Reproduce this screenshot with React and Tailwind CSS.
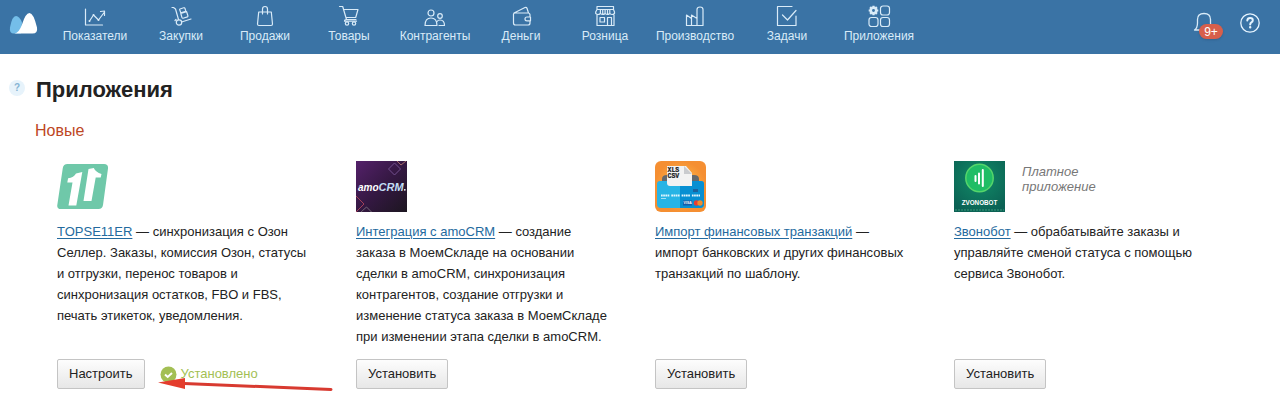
import React from 'react';

const icon = {
  fill: 'none',
  stroke: 'currentColor',
  strokeWidth: 1.2,
  strokeLinecap: 'round',
  strokeLinejoin: 'round',
  width: 24,
  height: 24,
  viewBox: '0 0 24 24',
  'aria-hidden': true,
};

const ChartIcon = () => (
  <svg {...icon}>
    <path d="M2.500 5v16h17M6.500 17l4-6 5 5 6-8M17.500 7.500 21.500 7v4.500" />
    <g fill="currentColor" stroke="none">
      <circle cx="6.500" cy="17" r="1" />
      <circle cx="10.500" cy="11" r="1" />
      <circle cx="15.500" cy="16" r="1" />
    </g>
  </svg>
);

const TrolleyIcon = () => (
  <svg {...icon}>
    <path d="M3 3.500h1.500l2 1.500 3 10.500M12.500 18l9.500-3M7 15.500l-1 1" />
    <circle cx="10" cy="18.500" r="2.700" />
    <path d="m11 5 3.700-1.200q1-.3 1.300.7l.8 2.700-5 1.600-1.100-3q-.2-.6.300-.8ZM11.800 9.500l5.800-1.800 1.300 4q.2.900-.5 1.200l-4.300 1.300q-.8.200-1.100-.6Z" />
  </svg>
);

const BagIcon = () => (
  <svg {...icon}>
    <path d="M5.700 8h12.600l1.200 12q0 1.500-1.500 1.500H6q-1.500 0-1.500-1.500ZM9.500 10V5q0-2.500 2.500-2.500T14.500 5v5" />
  </svg>
);

const CartIcon = () => (
  <svg {...icon}>
    <path d="M2.500 2.500h3.200l3.800 13h9.500M6.500 5.500h14.500l-2.300 8H9M9.500 15.500q-2 0-2 1.700h12" />
    <circle cx="10" cy="19.500" r="1.700" />
    <circle cx="17" cy="19.500" r="1.700" />
  </svg>
);

const PeopleIcon = () => (
  <svg {...icon}>
    <circle cx="8" cy="9" r="3" />
    <circle cx="17" cy="12" r="2.300" />
    <path d="M2 21.500q0-7.500 6-7.500t6 7.500ZM14 17.500q1-1.500 3-1.500 4.500 0 4.500 5.500H16" />
  </svg>
);

const WalletIcon = () => (
  <svg {...icon}>
    <path d="M4.500 10v9q0 2 2 2h12.500q2 0 2-2v-2.200M21 13v-2q0-2-2-2H6q-1.500 0-1.500 1M5 9l11-5.500q1.500-.5 2 .8L19.500 9M21 13h-3q-2 0-2 1.900t2 1.900h3.500V13Z" />
  </svg>
);

const ShopIcon = () => (
  <svg {...icon}>
    <path d="M4 2.500h16.500v3H4ZM4 5.500 2.700 8v1.500q2.400 2 4.700 0 2.400 2 4.700 0 2.400 2 4.700 0 2.400 2 4.700 0V8l-1-2.500M7.400 5.500v4M12.100 5.500v4M16.800 5.500v4M9.700 5.500v4M14.500 5.500v4M4 11v10.500h17V11M7 13.500h4.500v4.500H7ZM14.500 21.500v-8h4v8" />
  </svg>
);

const FactoryIcon = () => (
  <svg {...icon}>
    <path d="M3.500 21.500V11l5 3.500v7ZM8.500 14.500V11l5.500 3.500v7M14 14.500V5.500q0-2.500 3-2.500t3 2.500v16H3.500" />
  </svg>
);

const TaskIcon = () => (
  <svg {...icon}>
    <path d="M17 2.500H2.500v19h18.500V12M7.500 11l5 5L21 6.500" />
  </svg>
);

const AppsIcon = () => (
  <svg {...icon}>
    <rect x="13.500" y="2" width="9" height="9" rx="2.500" />
    <rect x="2" y="13.500" width="9" height="9" rx="2.500" />
    <rect x="13.500" y="13.500" width="9" height="9" rx="2.500" />
    <circle cx="6.500" cy="6.500" r="2.700" strokeWidth="2.500" />
    <path d="M6.500 1.700v1.500M6.500 9.800v1.500M1.700 6.500h1.500M9.800 6.500h1.500M3.100 3.100l1 1M8.900 8.900l1 1M9.900 3.100l-1 1M4.100 8.900l-1 1" strokeWidth="2.200" strokeLinecap="butt" />
  </svg>
);

const NAV = [
  ['Показатели', ChartIcon, 'w-[86px]'],
  ['Закупки', TrolleyIcon, 'w-[86px]'],
  ['Продажи', BagIcon, 'w-[82px]'],
  ['Товары', CartIcon, 'w-[86px]'],
  ['Контрагенты', PeopleIcon, 'w-[86px]'],
  ['Деньги', WalletIcon, 'w-[86px]'],
  ['Розница', ShopIcon, 'w-[82px]'],
  ['Производство', FactoryIcon, 'w-[98px]'],
  ['Задачи', TaskIcon, 'w-[86px]'],
  ['Приложения', AppsIcon, 'w-[98px]'],
];

const TopsellerLogo = () => (
  <svg width="52" height="52" viewBox="0 0 52 52" role="img" aria-label="TOPSE11ER">
    <path d="M10.500 3H47q4.500 0 4 4.500L46 44q-.6 4-4.500 4H4q-4.300 0-3.700-4L5.800 7q.6-4 4.700-4Z" fill="#6fc8a9" />
    <path d="M19 12.500 25.300 11l-6 33.500h-7.800l4-23H10.300l.8-4.300q5.800-.6 7.900-4.700Z" fill="#fff" />
    <path d="m31.500 8 5.300-1q1.800 4 7.700 6l-.8 3.500h-5L34.500 40h-8Z" fill="#fff" />
  </svg>
);

const AmoLogo = () => (
  <svg width="52" height="52" viewBox="0 0 52 52" role="img" aria-label="amoCRM">
    <defs>
      <linearGradient id="amo" x1="0" y1="0" x2="1" y2="1">
        <stop offset="0" stopColor="#54216a" />
        <stop offset=".5" stopColor="#351843" />
        <stop offset="1" stopColor="#1c1620" />
      </linearGradient>
    </defs>
    <path d="M0 0h51v51H0Z" fill="url(#amo)" />
    <g fill="none" strokeWidth="1">
      <path d="m32.500 8 6-6 6 6-6 6Z" stroke="#73508e" />
      <path d="m41 0 4 4 5-4" stroke="#a36a68" />
      <path d="m0 35 8 8-8 8" stroke="#a34058" />
      <path d="m5 51 5.500-5 5 5" stroke="#736777" />
    </g>
    <text x="2" y="29.500" fill="#fff" fontFamily="Liberation Sans, sans-serif" fontSize="10" fontStyle="italic" fontWeight="700">
      amo<tspan fill="#c2def5" fontSize="11">CRM</tspan>
    </text>
    <circle cx="48.800" cy="28.800" r=".9" fill="#fff" />
  </svg>
);

const ImportLogo = () => (
  <svg width="52" height="52" viewBox="0 0 52 52" role="img" aria-label="XLS CSV">
    <defs>
      <radialGradient id="imp">
        <stop offset="0" stopColor="#ffc44f" />
        <stop offset="1" stopColor="#f58f32" />
      </radialGradient>
    </defs>
    <rect width="51" height="51" rx="6" fill="url(#imp)" />
    <path d="M7 22v-4q0-4 5-4h27q5 0 5 4v4Z" fill="#65696d" />
    <path d="M5 20h41q3 0 3 3v20q0 4-4 4H6q-4 0-4-4V23q0-3 3-3Z" fill="#27b4e5" />
    <path d="M25 20h21q3 0 3 3v20q0 4-4 4H25Z" fill="#078fd2" />
    <path d="M12 5h19l6 7v13H15q-3 0-3-3Z" fill="#f2f2f2" />
    <path d="M29 5v8h8Z" fill="#c9cbce" />
    <g fill="#15171a" stroke="#15171a" strokeWidth=".2" fontFamily="Liberation Mono, monospace" fontSize="6.500" fontWeight="700">
      <text x="12.500" y="10.500">XLS</text>
      <text x="12.500" y="16.500">CSV</text>
    </g>
    <path d="M6 34.500h39" stroke="#e1f5fd" strokeWidth="2.200" strokeDasharray="1.700 .5 1.700 .5 1.700 .5 1.700 2" />
    <path d="M6 37.500h5" stroke="#a4dff4" />
    <rect x="38" y="28" width="5" height="3" fill="#1b619d" />
    <rect x="28" y="39.500" width="9" height="5" fill="#155baa" />
    <text x="28.600" y="43.300" fill="#fff" fontFamily="Liberation Sans, sans-serif" fontSize="3.500" fontWeight="700">VISA</text>
    <circle cx="41.500" cy="42" r="2.700" fill="#e73e31" />
    <circle cx="45" cy="42" r="2.700" fill="#f08c2e" />
  </svg>
);

const ZvonobotLogo = () => (
  <svg width="52" height="52" viewBox="0 0 52 52" role="img" aria-label="ZVONOBOT">
    <defs>
      <radialGradient id="zvo" cy=".35" r=".7">
        <stop offset="0" stopColor="#118c67" />
        <stop offset="1" stopColor="#0b6154" />
      </radialGradient>
    </defs>
    <path d="M0 0h51v51H0Z" fill="url(#zvo)" />
    <circle cx="25.500" cy="17" r="13.700" fill="#20bd65" stroke="#55d56b" strokeWidth="1.500" />
    <path d="M21.500 15v5M25 12.500v10M28.800 9v16" stroke="#fff" strokeWidth="2" strokeLinecap="round" />
    <text x="25.500" y="43.500" textAnchor="middle" fill="#fff" fontFamily="Liberation Sans, sans-serif" fontSize="6.300" fontWeight="700">ZVONOBOT</text>
    <path d="M1 49h49" stroke="#3b9a7a" strokeWidth="1" strokeDasharray="2 1" />
  </svg>
);

const APPS = [
  {
    name: 'TOPSE11ER',
    Logo: TopsellerLogo,
    text: 'синхронизация с Озон Селлер. Заказы, комиссия Озон, статусы и отгрузки, перенос товаров и синхронизация остатков, FBO и FBS, печать этикеток, уведомления.',
    installed: true,
  },
  {
    name: 'Интеграция с amoCRM',
    Logo: AmoLogo,
    text: 'создание заказа в МоемСкладе на основании сделки в amoCRM, синхронизация контрагентов, создание отгрузки и изменение статуса заказа в МоемСкладе при изменении этапа сделки в amoCRM.',
  },
  {
    name: 'Импорт финансовых транзакций',
    Logo: ImportLogo,
    text: 'импорт банковских и других финансовых транзакций по шаблону.',
  },
  {
    name: 'Звонобот',
    Logo: ZvonobotLogo,
    text: 'обрабатывайте заказы и управляйте сменой статуса с помощью сервиса Звонобот.',
    paid: true,
  },
];

function Header() {
  return (
    <header className="flex h-[54px] items-start bg-[#3a73a5] text-[#d9ebf8]">
      <a href="#" aria-label="МойСклад" className="w-[52px] shrink-0 pt-3 pl-[9px]">
        <svg width="30" height="22" viewBox="0 0 30 22" aria-hidden="true">
          <path d="M5 21.500Q0 21.500 1 15.500 3 4 7 4q3.500 0 6 6.500L12 21.500Z" fill="#74bee9" />
          <path d="M5.500 21.500q4.500-.5 7.500-9Q16.500 1 20.500 1 24.500 1 28 15.500q1 6-4.500 6Z" fill="#fff" />
        </svg>
      </a>
      <nav className="flex">
        {NAV.map(([label, Icon, width]) => (
          <a key={label} href="#" className={`${width} flex shrink-0 flex-col items-center pt-1 text-[12px] leading-4`}>
            <Icon />
            <span>{label}</span>
          </a>
        ))}
      </nav>
      <div className="ml-auto flex items-center gap-3 pt-[10px] pr-[19px]">
        <button type="button" aria-label="Уведомления" className="relative flex h-7 w-[34px]">
          <svg width="22" height="24" viewBox="0 0 22 24" fill="none" stroke="currentColor" strokeWidth="1.3" aria-hidden="true">
            <path d="M1.500 20q3-2 3-7V9.500q0-6 6.500-6t6.500 6v3.500q0 5 3 7Z" strokeLinejoin="round" />
          </svg>
          <span className="absolute top-[14px] left-[6px] flex h-[15px] w-6 items-center justify-center rounded-full bg-[#d75f4b] text-[12px] text-white shadow">9+</span>
        </button>
        <button type="button" aria-label="Помощь" className="flex">
          <svg width="22" height="22" viewBox="0 0 22 22" fill="none" stroke="#e5f4ff" strokeLinecap="round" aria-hidden="true">
            <circle cx="11" cy="10" r="9.200" strokeWidth="1.300" />
            <path d="M8.300 7.500q.2-2.500 2.800-2.500 2.700 0 2.700 2.200 0 1.300-1.400 2.200-1.200.8-1.200 2" strokeWidth="2" />
            <circle cx="11.200" cy="14.300" r=".6" strokeWidth="1.200" />
          </svg>
        </button>
      </div>
    </header>
  );
}

function AppCard({ name, Logo, text, installed, paid }) {
  return (
    <article className="flex flex-col">
      <div className="flex items-start gap-4">
        <Logo />
        {paid && <p className="w-20 pt-[3px] text-[13px] leading-[15px] text-[#777] italic">Платное приложение</p>}
      </div>
      <p className="mt-2 mb-3 max-w-[258px] text-[13px] leading-[21px]">
        <a href="#" className="text-[#246a9e] underline underline-offset-2">{name}</a> — {text}
      </p>
      <div className="relative mt-auto flex items-center gap-[15px]">
        <button type="button" className="h-[30px] rounded-xs border border-[#c4c4c4] bg-linear-to-b from-[#fdfdfd] to-[#e7e7e7] px-[11px] text-[13px]">
          {installed ? 'Настроить' : 'Установить'}
        </button>
        {installed && (
          <>
            <span className="flex items-center gap-1 text-[13px] text-[#a3bf54]">
              <svg width="17" height="17" viewBox="0 0 17 17" aria-hidden="true">
                <circle cx="8.500" cy="8.500" r="8" fill="#a3bf54" />
                <path d="m5 8.500 2.700 2.500 4.300-4" fill="none" stroke="#fff" strokeWidth="2" />
              </svg>
              Установлено
            </span>
            <svg width="176" height="18" viewBox="0 0 176 18" className="pointer-events-none absolute top-[17px] left-[101px]" aria-hidden="true">
              <path d="M26 7.500 173 13.500" stroke="#d83a30" strokeWidth="3" strokeLinecap="round" />
              <path d="M0 6.500 27 2v11Z" fill="#e43d2d" />
            </svg>
          </>
        )}
      </div>
    </article>
  );
}

export default function App() {
  return (
    <div className="bg-white pb-6 font-['Liberation_Sans',Arial,sans-serif] text-[#222]">
      <Header />
      <main className="pt-[22px]">
        <div className="flex items-start">
          <button type="button" aria-label="Справка" className="mt-1 mr-[11px] ml-[9px] size-4 rounded-full bg-[#e7f3fb] text-[10px] leading-4 font-bold text-[#86b3d3]">?</button>
          <h1 className="text-[22px] leading-7 font-bold">Приложения</h1>
        </div>
        <h2 className="mt-[17px] pl-[35px] text-[16px] leading-5 text-[#bd4724]">Новые</h2>
        <section className="mt-5 grid grid-cols-4 pr-[27px] pl-[57px]">
          {APPS.map((app) => (
            <AppCard key={app.name} {...app} />
          ))}
        </section>
      </main>
    </div>
  );
}
